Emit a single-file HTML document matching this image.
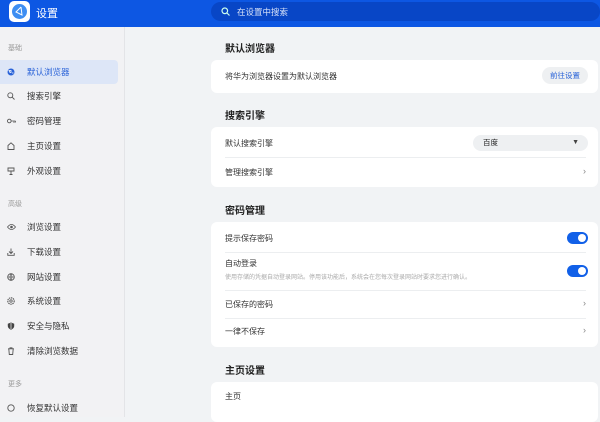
<!DOCTYPE html><html><head><meta charset="utf-8"><style>
*{margin:0;padding:0;box-sizing:border-box}
body{width:600px;height:417px;overflow:hidden;background:#f1f3f5;font-family:"Liberation Sans","Noto Sans CJK SC",sans-serif;position:relative;color:#222}
.hd{position:absolute;left:0;top:0;width:600px;height:27px;background:#0d57e3}
.logo{position:absolute;left:9px;top:1px;width:21px;height:21px;background:#fff;border-radius:5px}
.logo i{position:absolute;left:3px;top:3px;width:15px;height:15px;border-radius:50%;background:#3e8ef2}
.ttl{position:absolute;left:36px;top:5px;color:#fff;font-size:11px}
.sb{position:absolute;left:211px;top:2px;width:389px;height:19px;background:#0846c6;border-radius:10px}
.sb span{position:absolute;left:26px;top:4px;color:#d8e2f8;font-size:8.5px}
.side{position:absolute;left:0;top:27px;width:125px;height:390px;background:#f2f2f4;border-right:1px solid #e3e4e7}
.lb{position:absolute;left:8px;font-size:7px;color:#999}
.it{position:absolute;left:0;width:118px;height:24px;font-size:8.5px;color:#333;line-height:24px;padding-left:27px}
.it.on{background:#dde6f7;color:#2a63d8;border-radius:0 4px 4px 0}
.it svg{position:absolute;left:7px;top:8px}
h3{position:absolute;left:225px;font-size:10px;font-weight:bold;color:#222}
.card{position:absolute;left:211px;width:387px;background:#fff;border-radius:6px}
.row{position:absolute;left:14px;font-size:8px;color:#333}
.sep{position:absolute;left:14px;right:12px;height:1px;background:#eceef0}
.ar{position:absolute;right:12px;font-size:9px;color:#888}
.tg{position:absolute;right:10px;width:21px;height:12px;background:#1160e8;border-radius:6px}
.tg i{position:absolute;right:2px;top:2px;width:8px;height:8px;background:#fff;border-radius:50%}
</style></head><body>
<div class="hd"><div class="logo"><i></i><svg style="position:absolute;left:5px;top:5px" width="11" height="11" viewBox="0 0 11 11"><path d="M7 1L2 6L8 9L7 1" fill="none" stroke="#fff" stroke-width="1"/></svg></div><div class="ttl">设置</div>
<div class="sb"><svg style="position:absolute;left:10px;top:5px" width="9" height="9" viewBox="0 0 9 9"><circle cx="3.8" cy="3.8" r="2.8" fill="none" stroke="#cfe" stroke-width="1.2"/><path d="M6 6L8.5 8.5" stroke="#cfe" stroke-width="1.2"/></svg><span>在设置中搜索</span></div></div>
<div class="side">
<div class="lb" style="top:16px">基础</div>
<div class="it on" style="top:33px"><svg width="8" height="8" viewBox="0 0 8 8"><circle cx="4" cy="4" r="3.5" fill="#2a63d8"/><path d="M2 2.5h2v2h-1zM5 5h1.5" stroke="#fff" stroke-width=".8" fill="none"/></svg>默认浏览器</div>
<div class="it" style="top:57px"><svg width="8" height="8" viewBox="0 0 8 8"><circle cx="3.3" cy="3.3" r="2.5" fill="none" stroke="#555" stroke-width=".9"/><path d="M5.2 5.2L7.5 7.5" stroke="#555" stroke-width=".9"/></svg>搜索引擎</div>
<div class="it" style="top:82px"><svg width="9" height="8" viewBox="0 0 9 8"><circle cx="2.3" cy="4" r="1.8" fill="none" stroke="#555" stroke-width=".9"/><path d="M4 4h4.5M7 4v2M8.5 4v1.5" stroke="#555" stroke-width=".8" fill="none"/></svg>密码管理</div>
<div class="it" style="top:107px"><svg width="8" height="8" viewBox="0 0 8 8"><path d="M1 7.5V3.5L4 .8L7 3.5V7.5z" fill="none" stroke="#555" stroke-width=".9"/></svg>主页设置</div>
<div class="it" style="top:132px"><svg width="8" height="8" viewBox="0 0 8 8"><path d="M1 1h6v3H1zM4 4v3.5M2.5 7.5h3" fill="none" stroke="#555" stroke-width=".9"/></svg>外观设置</div>
<div class="lb" style="top:172px">高级</div>
<div class="it" style="top:188px"><svg width="9" height="8" viewBox="0 0 9 8"><path d="M.5 4Q4.5 -1 8.5 4Q4.5 9 .5 4z" fill="none" stroke="#555" stroke-width=".8"/><circle cx="4.5" cy="4" r="1.3" fill="#555"/></svg>浏览设置</div>
<div class="it" style="top:213px"><svg width="8" height="8" viewBox="0 0 8 8"><path d="M4 .5v5M2 3.5L4 5.5L6 3.5M.8 5v2.3h6.4V5" fill="none" stroke="#555" stroke-width=".9"/></svg>下载设置</div>
<div class="it" style="top:238px"><svg width="8" height="8" viewBox="0 0 8 8"><circle cx="4" cy="4" r="3.3" fill="none" stroke="#555" stroke-width=".9"/><path d="M.7 4h6.6M4 .7Q2 4 4 7.3Q6 4 4 .7" fill="none" stroke="#555" stroke-width=".7"/></svg>网站设置</div>
<div class="it" style="top:262px"><svg width="8" height="8" viewBox="0 0 8 8"><circle cx="4" cy="4" r="3.2" fill="none" stroke="#555" stroke-width="1.1" stroke-dasharray="1.4 .7"/><circle cx="4" cy="4" r="1.2" fill="none" stroke="#555" stroke-width=".8"/></svg>系统设置</div>
<div class="it" style="top:287px"><svg width="8" height="8" viewBox="0 0 8 8"><path d="M4 .5L7.2 1.7V4Q7.2 6.5 4 7.7Q.8 6.5 .8 4V1.7z" fill="#444"/><path d="M4 1v6" stroke="#fff" stroke-width=".7"/></svg>安全与隐私</div>
<div class="it" style="top:312px"><svg width="8" height="8" viewBox="0 0 8 8"><path d="M1 1.8h6M3 1.8V.8h2v1M1.8 1.8l.5 5.7h3.4l.5-5.7" fill="none" stroke="#555" stroke-width=".9"/></svg>清除浏览数据</div>
<div class="lb" style="top:352px">更多</div>
<div class="it" style="top:369px"><svg width="8" height="8" viewBox="0 0 8 8"><circle cx="4" cy="4" r="3.2" fill="none" stroke="#555" stroke-width=".9"/></svg>恢复默认设置</div>
</div>
<h3 style="top:40px">默认浏览器</h3>
<div class="card" style="top:60px;height:33px"><div class="row" style="top:11px">将华为浏览器设置为默认浏览器</div>
<div style="position:absolute;left:331px;top:7px;width:46px;height:17px;background:#eef0f2;border-radius:9px;font-size:7.5px;color:#2a63d8;text-align:center;line-height:17px">前往设置</div></div>
<h3 style="top:107px">搜索引擎</h3>
<div class="card" style="top:127px;height:60px"><div class="row" style="top:11px">默认搜索引擎</div>
<div style="position:absolute;left:262px;top:8px;width:115px;height:16px;background:#eef0f2;border-radius:8px;font-size:7.5px;line-height:16px;padding-left:10px">百度<span style="position:absolute;right:9px;font-size:7px;color:#444">▼</span></div>
<div class="sep" style="top:30px"></div><div class="row" style="top:40px">管理搜索引擎</div><div class="ar" style="top:39px">›</div></div>
<h3 style="top:202px">密码管理</h3>
<div class="card" style="top:222px;height:125px">
<div class="row" style="top:11px">提示保存密码</div><div class="tg" style="top:10px"><i></i></div>
<div class="sep" style="top:30px"></div>
<div class="row" style="top:36px">自动登录</div>
<div class="row" style="top:50px;font-size:6px;color:#aaa">使用存储的凭据自动登录网站。停用该功能后，系统会在您每次登录网站时要求您进行确认。</div>
<div class="tg" style="top:43px"><i></i></div>
<div class="sep" style="top:68px"></div>
<div class="row" style="top:77px">已保存的密码</div><div class="ar" style="top:76px">›</div>
<div class="sep" style="top:96px"></div>
<div class="row" style="top:104px">一律不保存</div><div class="ar" style="top:103px">›</div>
</div>
<h3 style="top:362px">主页设置</h3>
<div class="card" style="top:382px;height:40px"><div class="row" style="top:9px">主页</div></div>
</body></html>
